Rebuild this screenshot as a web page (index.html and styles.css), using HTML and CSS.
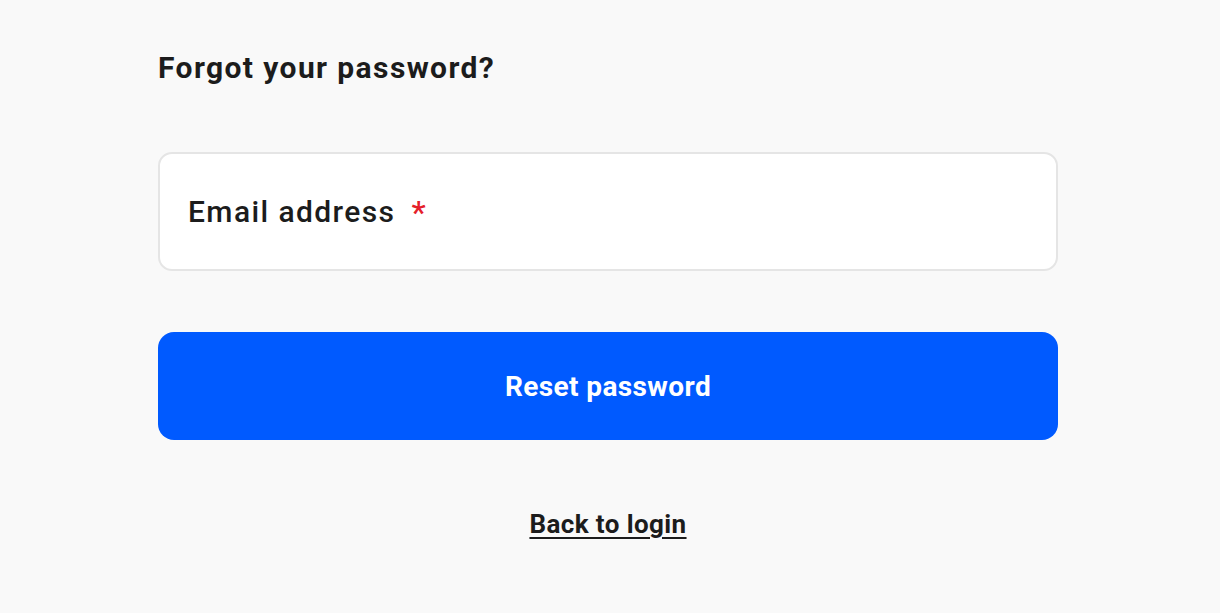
FILE: index.html
```html
<!DOCTYPE html>
<html lang="en">
<head>
<meta charset="utf-8">
<title>Forgot your password?</title>
<link rel="stylesheet" href="styles.css">
</head>
<body>
<main class="page">
  <h1 class="title">Forgot your password?</h1>
  <label class="field">
    <span class="field-label">Email address</span>
    <span class="required">*</span>
  </label>
  <button class="btn" type="button">Reset password</button>
  <div class="back-row"><a class="back" href="#">Back to login</a></div>
</main>
</body>
</html>
```

FILE: styles.css
```css
html, body {
  margin: 0;
  padding: 0;
  background: #f9f9f9;
}
body {
  font-family: Roboto, "Liberation Sans", Arial, sans-serif;
  color: #1c1c1c;
}
.page {
  width: 900px;
  margin-left: 158px;
  padding-top: 51px;
  display: flex;
  flex-direction: column;
}
.title {
  margin: 0;
  font-size: 30px;
  line-height: 34px;
  font-weight: 700;
  letter-spacing: 1.4px;
  color: #1c1c1c;
}
.field {
  margin-top: 67px;
  box-sizing: border-box;
  height: 119px;
  background: #ffffff;
  border: 2px solid #e5e5e5;
  border-radius: 14px;
  display: flex;
  align-items: center;
  padding-left: 28px;
  font-size: 30px;
  font-weight: 500;
  letter-spacing: 1.4px;
  gap: 16px;
}
.field-label {
  color: #1c1c1c;
}
.required {
  color: #e5202a;
  font-size: 32px;
}
.btn {
  margin-top: 61px;
  height: 108px;
  border: none;
  border-radius: 16px;
  background: #005aff;
  color: #ffffff;
  font-family: Roboto, "Liberation Sans", Arial, sans-serif;
  font-size: 28px;
  font-weight: 700;
  letter-spacing: 0.4px;
  cursor: pointer;
}
.back-row {
  margin-top: 69px;
  display: flex;
  justify-content: center;
}
.back {
  font-size: 26px;
  font-weight: 700;
  letter-spacing: 0.4px;
  color: #1c1c1c;
  text-decoration: underline;
  text-underline-offset: 4px;
}
```
